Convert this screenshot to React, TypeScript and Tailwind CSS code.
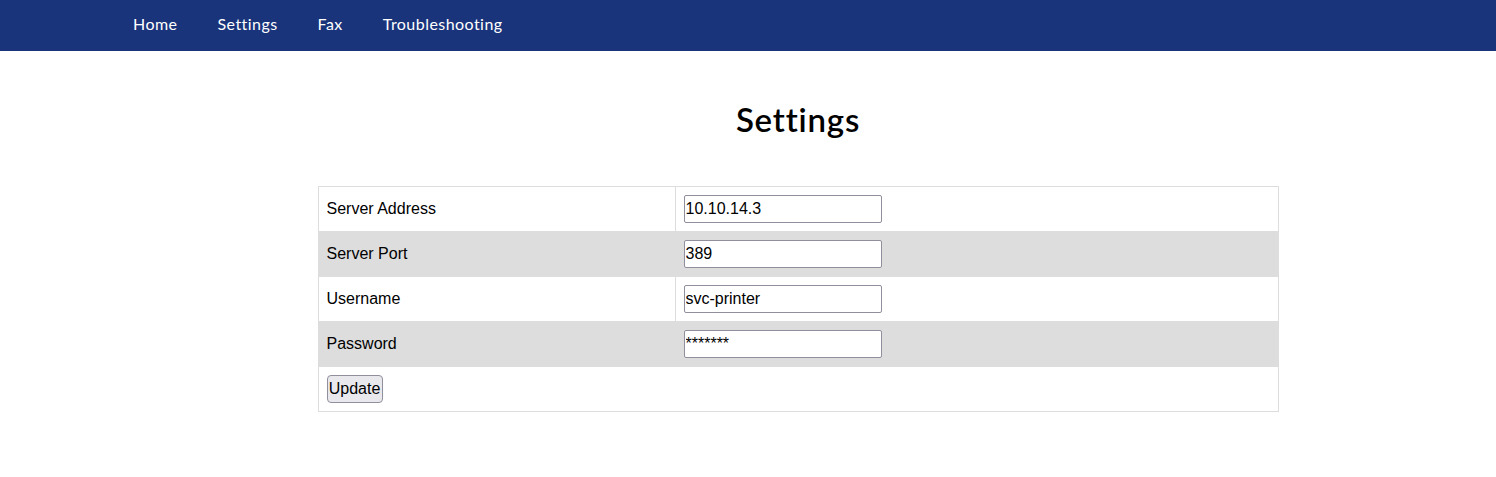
import React from "react";

const rows = [
  { label: "Server Address", value: "10.10.14.3" },
  { label: "Server Port", value: "389" },
  { label: "Username", value: "svc-printer" },
  { label: "Password", value: "*******" },
];

export default function App() {
  return (
    <div className="min-h-[477px] bg-white">
      <nav className="h-[51px] bg-[#1a347b] flex items-center pb-[3px] pl-[113px] font-['Lato',sans-serif] text-[16px] tracking-[0.45px] text-white">
        {["Home", "Settings", "Fax", "Troubleshooting"].map((t) => (
          <a key={t} className="px-[20px] leading-[20px] cursor-pointer">
            {t}
          </a>
        ))}
      </nav>
      <div className="pl-[100px] flex flex-col items-center">
        <h1 className="mt-[48px] mb-[47px] text-[33px] leading-[40px] tracking-[0.8px] font-semibold font-['Lato',sans-serif] text-black">
          Settings
        </h1>
        <table className="w-[961px] border-collapse border border-[#ddd] font-['Liberation_Sans',Arial,sans-serif] text-[16px] text-black">
          <tbody>
            {rows.map((r, i) => (
              <tr key={r.label} className={i % 2 === 1 ? "bg-[#dddddd]" : "bg-white"}>
                <td className="w-[357px] border border-[#ddd] px-[8px] py-[8px] leading-[28px]">{r.label}</td>
                <td className="border border-[#ddd] px-[8px] py-[8px]">
                  <input
                    type="text"
                    defaultValue={r.value}
                    className="block w-[198px] h-[28px] bg-white border border-[#8f8f9d] rounded-[2px] px-[1px] text-[16px] font-['Liberation_Sans',Arial,sans-serif] text-black"
                  />
                </td>
              </tr>
            ))}
            <tr className="bg-white">
              <td colSpan={2} className="border border-[#ddd] px-[8px] py-[8px]">
                <button className="block w-[56px] h-[28px] bg-[#e9e9ed] border border-[#8f8f9d] rounded-[4px] text-[16px] leading-[18px] font-['Liberation_Sans',Arial,sans-serif] text-black">
                  Update
                </button>
              </td>
            </tr>
          </tbody>
        </table>
      </div>
    </div>
  );
}
